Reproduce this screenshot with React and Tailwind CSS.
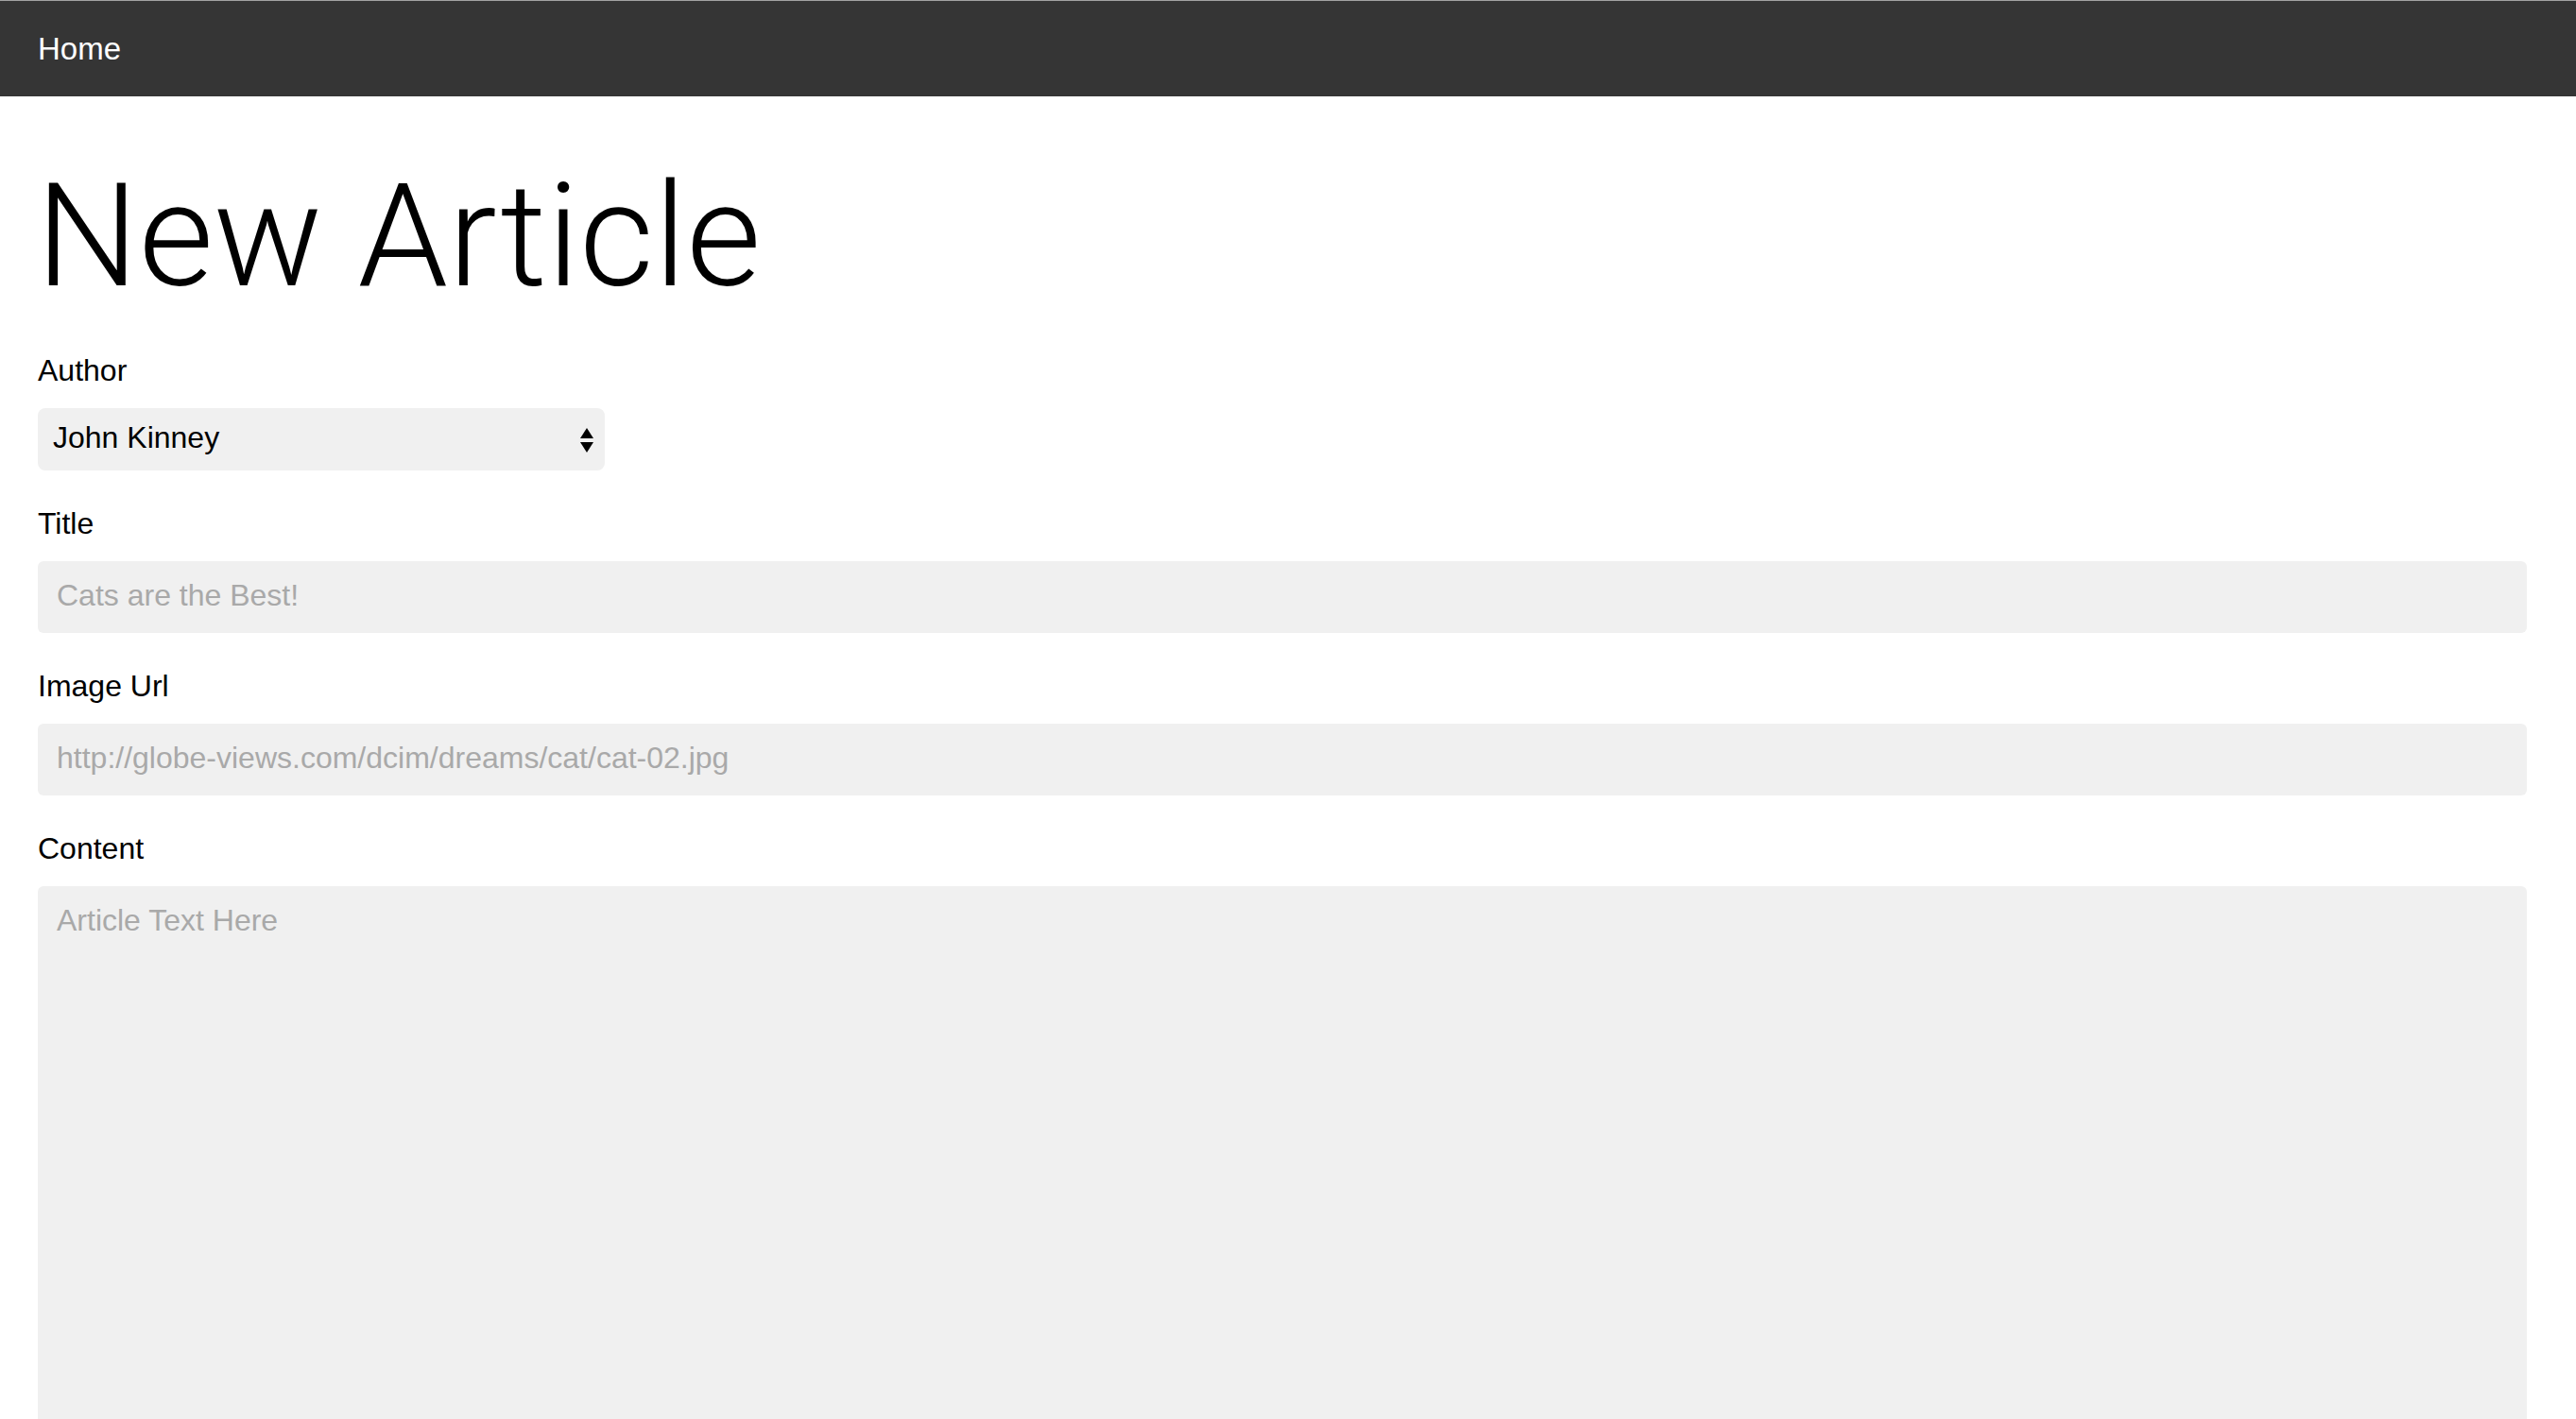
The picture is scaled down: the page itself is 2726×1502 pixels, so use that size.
import React, { useState } from 'react';

const authors = ['John Kinney', 'Jane Doe', 'Sam Carter'];

const Label = ({ htmlFor, children }) => (
  <label htmlFor={htmlFor} className="block text-[32px] leading-[36px] text-black mb-[22px]">
    {children}
  </label>
);

export default function App() {
  const [author, setAuthor] = useState(authors[0]);
  const [title, setTitle] = useState('');
  const [imageUrl, setImageUrl] = useState('');
  const [content, setContent] = useState('');

  return (
    <div className="min-h-screen bg-white" style={{ fontFamily: '"Liberation Sans", Arial, sans-serif' }}>
      {/* Nav */}
      <div className="h-px bg-[#a3a3a3]" />
      <nav className="h-[101px] bg-[#353535] flex items-center pl-[40px]">
        <a href="#" className="text-white text-[33px] leading-none">Home</a>
      </nav>

      <main className="pl-[40px] pr-[52px] pt-[71px] pb-[40px]">
        <h1
          className="text-[153px] leading-none font-light text-black mb-[48px] -ml-[2px]"
          style={{ fontFamily: 'Roboto, "Liberation Sans", sans-serif' }}
        >
          New Article
        </h1>

        <form className="flex flex-col gap-[38px]" onSubmit={(e) => e.preventDefault()}>
          {/* Author */}
          <div>
            <Label htmlFor="author">Author</Label>
            <div className="relative w-[600px]">
              <select
                id="author"
                value={author}
                onChange={(e) => setAuthor(e.target.value)}
                className="appearance-none w-full h-[66px] rounded-[8px] bg-[#f0f0f0] pl-[16px] pr-[40px] pb-[4px] text-[32px] text-black outline-none"
              >
                {authors.map((a) => (
                  <option key={a} value={a}>{a}</option>
                ))}
              </select>
              <svg
                className="absolute right-[12px] top-[21px] pointer-events-none"
                width="14"
                height="26"
                viewBox="0 0 14 26"
              >
                <polygon points="7,0 14,11 0,11" fill="#000" />
                <polygon points="0,15 14,15 7,26" fill="#000" />
              </svg>
            </div>
          </div>

          {/* Title */}
          <div>
            <Label htmlFor="title">Title</Label>
            <input
              id="title"
              type="text"
              value={title}
              onChange={(e) => setTitle(e.target.value)}
              placeholder="Cats are the Best!"
              className="block w-full h-[76px] rounded-[6px] bg-[#f0f0f0] px-[20px] pb-[4px] text-[32px] text-black placeholder:text-[#a9a9a9] outline-none"
            />
          </div>

          {/* Image Url */}
          <div>
            <Label htmlFor="imageUrl">Image Url</Label>
            <input
              id="imageUrl"
              type="text"
              value={imageUrl}
              onChange={(e) => setImageUrl(e.target.value)}
              placeholder="http://globe-views.com/dcim/dreams/cat/cat-02.jpg"
              className="block w-full h-[76px] rounded-[6px] bg-[#f0f0f0] px-[20px] pb-[4px] text-[32px] text-black placeholder:text-[#a9a9a9] outline-none"
            />
          </div>

          {/* Content */}
          <div>
            <Label htmlFor="content">Content</Label>
            <textarea
              id="content"
              value={content}
              onChange={(e) => setContent(e.target.value)}
              placeholder="Article Text Here"
              className="block w-full h-[640px] resize-none rounded-[6px] bg-[#f0f0f0] px-[20px] py-[12px] text-[32px] text-black placeholder:text-[#a9a9a9] outline-none"
            />
          </div>
        </form>
      </main>
    </div>
  );
}
